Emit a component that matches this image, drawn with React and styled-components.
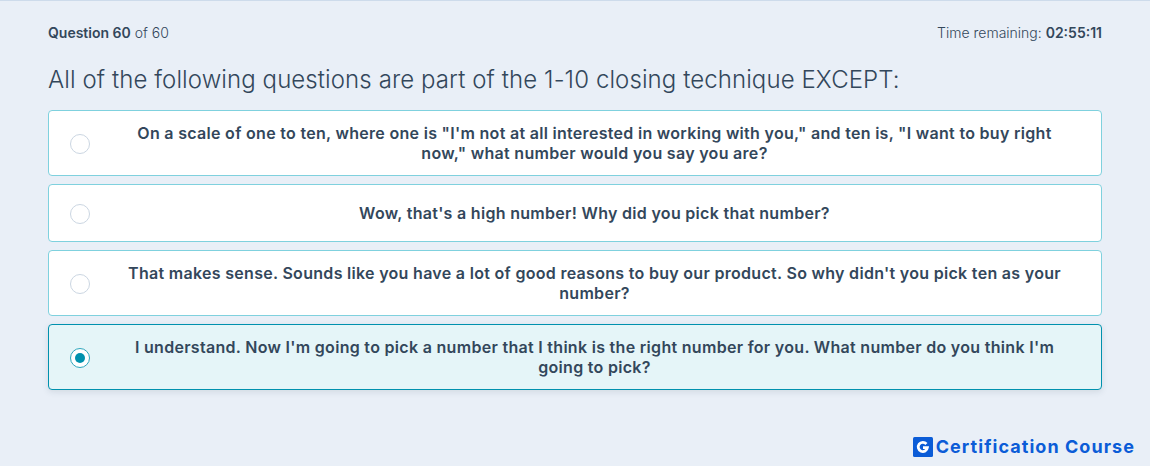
import React from "react";
import styled, { createGlobalStyle } from "styled-components";

const GlobalStyle = createGlobalStyle`
  html, body {
    margin: 0;
    padding: 0;
    height: 100%;
    background: #e9eff7;
  }
  body {
    font-family: "Inter", "Lato", sans-serif;
    overflow: hidden;
  }
`;

const Page = styled.div`
  height: 466px;
  box-sizing: border-box;
  border-top: 1px solid #cddbeb;
  padding: 22px 48px 0;
  display: flex;
  flex-direction: column;
`;

const TopBar = styled.div`
  display: flex;
  justify-content: space-between;
  align-items: center;
  height: 18px;
  font-size: 14px;
  font-weight: 300;
  color: #33475b;
`;

const Strong = styled.strong`
  font-weight: 600;
  color: #33475b;
`;

const Title = styled.h1`
  margin: 19px 0 0;
  font-size: 24px;
  line-height: 40px;
  font-weight: 300;
  letter-spacing: 0.09px;
  color: #33475b;
`;

const List = styled.div`
  margin-top: 10px;
  display: flex;
  flex-direction: column;
  gap: 8px;
`;

const Option = styled.div`
  display: flex;
  align-items: center;
  box-sizing: border-box;
  min-height: 58px;
  padding: 12px 36px 12px 21px;
  border: 1px solid ${(props) => (props.$selected ? "#0091ae" : "#7fd1de")};
  border-radius: 4px;
  background: ${(props) => (props.$selected ? "#e5f5f8" : "#fff")};
  box-shadow: ${(props) => (props.$selected ? "0 2px 6px rgba(45, 62, 80, 0.12)" : "none")};
`;

const Radio = styled.span`
  flex: none;
  box-sizing: border-box;
  width: 20px;
  height: 20px;
  margin-top: 2px;
  border-radius: 50%;
  background: #fff;
  border: 1px solid ${(props) => (props.$selected ? "#2fa6bd" : "#cbd6e2")};
  display: flex;
  align-items: center;
  justify-content: center;
  &::after {
    content: "";
    display: ${(props) => (props.$selected ? "block" : "none")};
    width: 10px;
    height: 10px;
    border-radius: 50%;
    background: #0091ae;
  }
`;

const OptionText = styled.div`
  flex: 1;
  padding-left: 34px;
  text-align: center;
  font-size: 16px;
  line-height: 20px;
  font-weight: 600;
  letter-spacing: 0.3px;
  color: #33475b;
`;

const Brand = styled.div`
  position: absolute;
  right: 15px;
  bottom: 9px;
  display: flex;
  align-items: center;
  gap: 3px;
  color: #0b5cd7;
  font-family: "Inter", sans-serif;
  font-size: 18px;
  font-weight: 700;
  letter-spacing: 1.05px;
`;

const LogoMark = styled.svg`
  width: 20px;
  height: 20px;
  display: block;
`;

const options = [
  `On a scale of one to ten, where one is "I'm not at all interested in working with you," and ten is, "I want to buy right now," what number would you say you are?`,
  "Wow, that's a high number! Why did you pick that number?",
  "That makes sense. Sounds like you have a lot of good reasons to buy our product. So why didn't you pick ten as your number?",
  "I understand. Now I'm going to pick a number that I think is the right number for you. What number do you think I'm going to pick?",
];

const App = () => (
  <>
    <GlobalStyle />
    <Page>
      <TopBar>
        <span>
          <Strong>Question 60</Strong> of 60
        </span>
        <span>
          Time remaining: <Strong>02:55:11</Strong>
        </span>
      </TopBar>
      <Title>All of the following questions are part of the 1-10 closing technique EXCEPT:</Title>
      <List>
        {options.map((text, i) => (
          <Option key={i} $selected={i === 3}>
            <Radio $selected={i === 3} />
            <OptionText>{text}</OptionText>
          </Option>
        ))}
      </List>
    </Page>
    <Brand>
      <LogoMark viewBox="0 0 20 20">
        <rect width="20" height="20" rx="1.5" fill="#0b5cd7" />
        <path
          d="M13.4 7A4.6 4.6 0 1 0 14.4 10.6H10"
          fill="none"
          stroke="#fff"
          strokeWidth="2.8"
        />
      </LogoMark>
      Certification Course
    </Brand>
  </>
);

export default App;
